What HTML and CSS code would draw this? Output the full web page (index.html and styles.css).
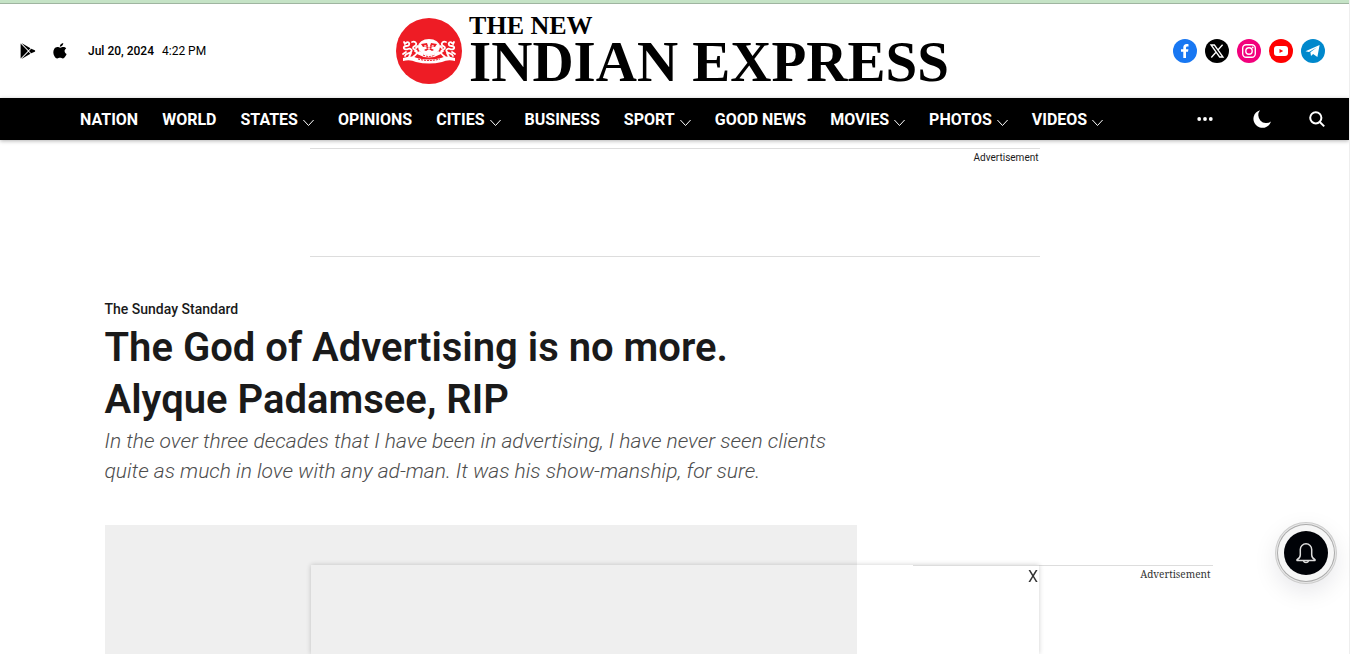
FILE: index.html
```
<!DOCTYPE html>
<html lang="en">
<head>
    <meta charset="UTF-8">
    <meta name="viewport" content="width=device-width, initial-scale=1.0">
    <title>The God of Advertising is no more. Alyque Padamsee, RIP</title>
    <link rel="stylesheet" href="styles.css">
</head>
<body>
    <header class="header">
        <div class="header-left">
            <a href="#" class="app-link" aria-label="Google Play">
                <svg width="16" height="16" viewBox="0 0 16 16">
                    <path d="M.6.6v14.8L7.9 8z"/>
                    <path d="M1.4 0l7.1 7.3 2-2zM1.4 16l7.1-7.3 2 2zM11.2 5.7L9 8l2.2 2.3 3.6-1.5q1-.8 0-1.6z"/>
                </svg>
            </a>
            <a href="#" class="app-link" aria-label="App Store">
                <svg width="16" height="16" viewBox="0 0 16 16">
                    <path d="M11.2 0c.1 1-.3 1.900-.9 2.600-.6.700-1.500 1.200-2.400 1.100-.1-1 .4-1.900.9-2.500C9.400.6 10.400.1 11.200 0zM14.200 5.400c-1 .6-1.600 1.500-1.600 2.700 0 1.300.8 2.400 2 2.900-.3.800-.7 1.600-1.200 2.300-.7 1.100-1.400 2.100-2.600 2.100-1.100 0-1.500-.7-2.800-.7s-1.700.7-2.800.7c-1.100 0-1.900-1-2.600-2C1.200 11.400.8 8.100 2.200 6c.8-1.200 2-1.900 3.200-1.900s1.900.7 2.900.7c.9 0 1.700-.7 3-.7 1.100 0 2.200.5 2.900 1.300z"/>
                </svg>
            </a>
            <p class="date"><b>Jul 20, 2024</b> <span>4:22 PM</span></p>
        </div>

        <a href="#" class="logo">
            <svg class="logo-crest" width="66" height="66" viewBox="0 0 66 66">
                <circle cx="33" cy="33" r="33" fill="#ee1c25"/>
                <g fill="none" stroke="#fff" stroke-linecap="round">
                    <path stroke-width="1.800" d="M10 25c2-2 4 0 3 2s-4 0-5 2 2 3 4 2 5 1 3 3-5 1-6 4M16 24c3-1 5 1 4 3s-3 1-3 3 4 1 4 4-2 3-4 5M7 36l3-2M13 39l2-4M8 24l1 2M22 28l-2 2M22 35l-3-2"/>
                    <path stroke-width="1.800" d="M56 25c-2-2-4 0-3 2s4 0 5 2-2 3-4 2-5 1-3 3 5 1 6 4M50 24c-3-1-5 1-4 3s3 1 3 3-4 1-4 4 2 3 4 5M59 36l-3-2M53 39l-2-4M58 24l-1 2M44 28l2 2M44 35l3-2"/>
                </g>
                <ellipse cx="33" cy="29" rx="11" ry="8" fill="#fff"/>
                <path d="M25 26l6-1 1 3-5 1zM41 26l-6-1-1 3 5 1zM28 32l9-5 1 1-8 5zM38 32l-9-5-1 1 8 5z" fill="#ee1c25"/>
                <path d="M23 33q10 7 20 0l2 3q-12 7-24 0z" fill="#fff"/>
                <path d="M27 37q6 3 12 0" fill="none" stroke="#ee1c25" stroke-dasharray="2 1"/>
                <path d="M7 40q9-3 14 0 12 3 24 0 5-3 14 0v3q-7-2-13 1-13 3-26 0-6-3-13-1z" fill="#fff"/>
                <path d="M22 41q11 3 22 0" fill="none" stroke="#ee1c25" stroke-dasharray="2 1"/>
            </svg>
            <span class="logo-text">
                <span class="logo-small">THE NEW</span>
                <span class="logo-big">INDIAN EXPRESS</span>
            </span>
        </a>

        <div class="social">
            <a href="#" aria-label="Facebook">
                <svg width="24" height="24" viewBox="0 0 24 24">
                    <circle cx="12" cy="12" r="12" fill="#1877f2"/>
                    <path d="M10.300 19v-6.200H8v-2.600h2.300V8.500C10.300 6.200 11.600 5 13.600 5c1 0 1.900.2 1.900.2v2.200h-1.100c-1.100 0-1.400.7-1.400 1.400v1.400h2.400l-.4 2.600h-2V19z" fill="#fff"/>
                </svg>
            </a>
            <a href="#" aria-label="X">
                <svg width="24" height="24" viewBox="0 0 24 24">
                    <circle cx="12" cy="12" r="12" fill="#000"/>
                    <path d="M6 6h3.400l8.600 12h-3.400zM17.600 5.700l-4.900 5.600M11.200 13l-4.900 5.500" fill="none" stroke="#fff" stroke-width="1.300"/>
                </svg>
            </a>
            <a href="#" aria-label="Instagram">
                <svg width="24" height="24" viewBox="0 0 24 24">
                    <circle cx="12" cy="12" r="12" fill="#f2007c"/>
                    <rect x="5.700" y="5.700" width="12.600" height="12.600" rx="3.500" fill="none" stroke="#fff" stroke-width="1.400"/>
                    <circle cx="12" cy="12" r="3.200" fill="none" stroke="#fff" stroke-width="1.400"/>
                    <circle cx="15.700" cy="8.400" r=".9" fill="#fff"/>
                </svg>
            </a>
            <a href="#" aria-label="YouTube">
                <svg width="24" height="24" viewBox="0 0 24 24">
                    <circle cx="12" cy="12" r="12" fill="#f00"/>
                    <rect x="5" y="7" width="14" height="10" rx="3" fill="#fff"/>
                    <path d="M10.500 9.900v4.200l3.700-2.100z" fill="#f00"/>
                </svg>
            </a>
            <a href="#" aria-label="Telegram">
                <svg width="24" height="24" viewBox="0 0 24 24">
                    <circle cx="12" cy="12" r="12" fill="#08c"/>
                    <path d="M4.500 12.200L18.600 6.100 16.400 18l-4.300-3.100-2.100 2-.6-3.600 6.600-5-8 4.600z" fill="#fff"/>
                </svg>
            </a>
        </div>
    </header>

    <nav class="navbar">
        <ul class="menu">
            <li><a href="#">NATION</a></li>
            <li><a href="#">WORLD</a></li>
            <li><a href="#">STATES <svg class="arrow" viewBox="0 0 11 8"><path d="M.4 1l5.100 5.500L10.600 1"/></svg></a></li>
            <li><a href="#">OPINIONS</a></li>
            <li><a href="#">CITIES <svg class="arrow" viewBox="0 0 11 8"><path d="M.4 1l5.100 5.500L10.600 1"/></svg></a></li>
            <li><a href="#">BUSINESS</a></li>
            <li><a href="#">SPORT <svg class="arrow" viewBox="0 0 11 8"><path d="M.4 1l5.100 5.500L10.600 1"/></svg></a></li>
            <li><a href="#">GOOD NEWS</a></li>
            <li><a href="#">MOVIES <svg class="arrow" viewBox="0 0 11 8"><path d="M.4 1l5.100 5.500L10.600 1"/></svg></a></li>
            <li><a href="#">PHOTOS <svg class="arrow" viewBox="0 0 11 8"><path d="M.4 1l5.100 5.500L10.600 1"/></svg></a></li>
            <li><a href="#">VIDEOS <svg class="arrow" viewBox="0 0 11 8"><path d="M.4 1l5.100 5.500L10.600 1"/></svg></a></li>
        </ul>
        <div class="tools">
            <button type="button" aria-label="More">
                <svg width="18" height="18" viewBox="0 0 18 18" fill="#fff">
                    <circle cx="2.200" cy="9" r="1.900"/>
                    <circle cx="8" cy="9" r="1.900"/>
                    <circle cx="13.800" cy="9" r="1.900"/>
                </svg>
            </button>
            <button type="button" aria-label="Dark mode">
                <svg width="18" height="18" viewBox="0 0 18 18">
                    <path d="M7 .2a9 9 0 1 0 11 11.400A8 8 0 0 1 7 .2z" fill="#fff"/>
                </svg>
            </button>
            <button type="button" aria-label="Search">
                <svg width="16" height="18" viewBox="0 0 16 18" fill="none" stroke="#fff" stroke-width="2">
                    <circle cx="6.800" cy="7.800" r="5.600"/>
                    <path d="M10.800 12l4.400 4.400"/>
                </svg>
            </button>
        </div>
    </nav>

    <div class="top-ad">Advertisement</div>

    <main class="container">
        <article class="story">
            <a href="#" class="section">The Sunday Standard</a>
            <h1>The God of Advertising is no more. Alyque Padamsee, RIP</h1>
            <p class="subtitle">In the over three decades that I have been in advertising, I have never seen clients quite as much in love with any ad-man. It was his show-manship, for sure.</p>
            <div class="story-image"></div>
        </article>
        <aside class="sidebar">
            <div class="side-ad">Advertisement</div>
        </aside>
    </main>

    <div class="sticky-ad">
        <button type="button" class="close" aria-label="Close">X</button>
    </div>

    <button type="button" class="bell" aria-label="Notifications">
        <svg width="20" height="22" viewBox="0 0 20 22" fill="none" stroke="#ddd" stroke-width="1.500" stroke-linejoin="round">
            <path d="M4.300 13V7.500a5.700 5.700 0 0 1 11.400 0V13c0 2 .8 3.200 3.300 4.600v1H1v-1C3.500 16.200 4.300 15 4.300 13z"/>
            <path d="M7.500 19a2.600 2.200 0 0 0 5 0"/>
        </svg>
    </button>
</body>
</html>
```
FILE: styles.css
```
* {
    box-sizing: border-box;
}

body {
    margin: 0;
    height: 100vh;
    overflow: hidden;
    display: flex;
    flex-direction: column;
    font-family: Roboto, Arial, sans-serif;
    color: #1a1a1a;
    background-color: #fff;
    border-right: 1px solid #eee;
}

a {
    color: inherit;
    text-decoration: none;
}

button {
    padding: 0;
    border: none;
    background: none;
    font-family: inherit;
    cursor: pointer;
}

svg {
    display: block;
}

/* header */
.header {
    display: grid;
    grid-template-columns: 1fr auto 1fr;
    align-items: center;
    padding: 11px 24px 11px 20px;
    border-top: 3px solid #c5e3c6;
    box-shadow: inset 0 1px #9fb5a0;
}

.header-left {
    display: flex;
    align-items: center;
    gap: 16px;
}

.date {
    display: flex;
    gap: 8px;
    margin: 0 0 0 4px;
    font-size: 12px;
    line-height: 16px;
    color: #000;
}

.date b {
    font-weight: 500;
}

.logo {
    display: flex;
    align-items: center;
    gap: 7px;
    color: #000;
    font-family: "Liberation Serif", "Times New Roman", serif;
    font-weight: bold;
}

.logo-text {
    display: flex;
    flex-direction: column;
    white-space: nowrap;
}

.logo-small {
    font-size: 26px;
    line-height: 23px;
}

.logo-big {
    font-size: 57px;
    line-height: 50px;
}

.social {
    display: flex;
    justify-content: flex-end;
    gap: 8px;
}

/* navigation */
.navbar {
    display: flex;
    justify-content: space-between;
    align-items: center;
    min-height: 42px;
    padding: 0 24px 0 80px;
    background-color: #000;
    color: #fff;
    box-shadow: 0 1px 4px rgba(0, 0, 0, 0.3);
}

.menu {
    display: flex;
    gap: 24px;
    margin: 0;
    padding: 2px 0 0;
    list-style: none;
    font-size: 16px;
    font-weight: 700;
    line-height: 20px;
    white-space: nowrap;
}

.menu a {
    display: flex;
    align-items: center;
    gap: 5px;
}

.arrow {
    width: 11px;
    height: 8px;
    margin-top: 6px;
    fill: none;
    stroke: #fff;
}

.tools {
    display: flex;
    gap: 38px;
}

/* ads */
.top-ad {
    align-self: center;
    width: 100%;
    max-width: 730px;
    min-height: 109px;
    margin-top: 8px;
    padding: 2px 1px;
    border-top: 1px solid #ddd;
    border-bottom: 1px solid #ddd;
    font-size: 10px;
    line-height: 14px;
    text-align: right;
}

.side-ad {
    width: 300px;
    padding: 1px 2px;
    border-top: 1px solid #ddd;
    font-family: "Noto Serif", "Liberation Serif", serif;
    font-size: 10px;
    line-height: 14px;
    text-align: right;
    color: #333;
}

.sticky-ad {
    position: fixed;
    bottom: 0;
    left: 50%;
    width: 728px;
    height: 89px;
    transform: translateX(-50%);
    text-align: right;
    box-shadow: 0 0 5px rgba(0, 0, 0, 0.2);
}

.close {
    padding: 2px 1px;
    font-size: 16px;
    line-height: 20px;
    color: #333;
}

/* story */
.container {
    flex: 1;
    display: grid;
    grid-template-columns: 752fr 364fr;
    gap: 24px;
    width: 100%;
    max-width: 1140px;
    margin: 0 auto;
    padding-top: 42px;
}

.story {
    display: flex;
    flex-direction: column;
}

.section {
    font-size: 14px;
    font-weight: 500;
    line-height: 20px;
}

h1 {
    max-width: 720px;
    margin: 3px 0 0;
    font-size: 40px;
    font-weight: 600;
    line-height: 52px;
}

.subtitle {
    margin: 0 0 39px;
    font-size: 21px;
    font-style: italic;
    font-weight: 300;
    line-height: 30px;
    color: #4d4d4d;
}

.story-image {
    flex: 1;
    background-color: #efefef;
}

.sidebar {
    display: flex;
    justify-content: center;
    padding-top: 266px;
}

/* notification bell */
.bell {
    position: fixed;
    right: 22px;
    bottom: 79px;
    display: flex;
    justify-content: center;
    align-items: center;
    width: 44px;
    height: 44px;
    border-radius: 50%;
    background-color: #000207;
    box-shadow: 0 0 0 6px #f6f6f6, 0 0 0 7px #aaa, 0 0 0 8px #e8e8e8, 0 0 0 9px #ccc, 0 8px 24px 8px rgba(0, 0, 40, 0.1);
}
```
